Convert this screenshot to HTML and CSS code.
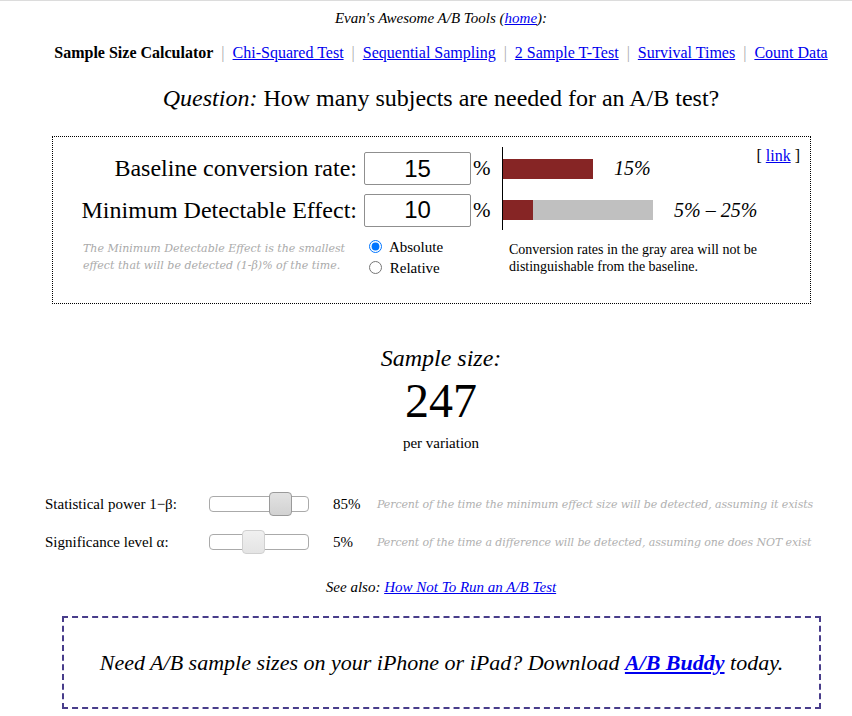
FILE: index.html
```html
<!DOCTYPE html>
<html>
<head>
<meta charset="utf-8">
<link rel="stylesheet" href="styles.css">
</head>
<body>
<div class="page">
  <p class="title">Evan's Awesome A/B Tools (<a href="#">home</a>):</p>
  <p class="nav"><b>Sample Size Calculator</b><span class="sep">|</span><a href="#">Chi-Squared Test</a><span class="sep">|</span><a href="#">Sequential Sampling</a><span class="sep">|</span><a href="#">2 Sample T-Test</a><span class="sep">|</span><a href="#">Survival Times</a><span class="sep">|</span><a href="#">Count Data</a></p>
  <h1 class="question"><i>Question:</i> How many subjects are needed for an A/B test?</h1>

  <div class="calc">
    <div class="lbl r1">Baseline conversion rate:</div>
    <div class="inp r1"><input type="text" value="15"></div>
    <div class="pct r1">%</div>
    <div class="chart r1">
      <div class="bar"><div class="seg red" style="width:90px"></div></div>
      <span class="barval">15%</span>
      <span class="permalink">[ <a href="#">link</a> ]</span>
    </div>

    <div class="lbl r2">Minimum Detectable Effect:</div>
    <div class="inp r2"><input type="text" value="10"></div>
    <div class="pct r2">%</div>
    <div class="chart r2">
      <div class="bar"><div class="seg red" style="width:30px"></div><div class="seg gray" style="width:120px"></div></div>
      <span class="barval">5% – 25%</span>
    </div>

    <div class="hint r3">The Minimum Detectable Effect is the smallest effect that will be detected (1-β)% of the time.</div>
    <div class="radios r3">
      <label><input type="radio" name="mde" checked> Absolute</label>
      <label><input type="radio" name="mde"> Relative</label>
    </div>
    <div class="note r3">Conversion rates in the gray area will not be distinguishable from the baseline.</div>
  </div>

  <div class="result">
    <div class="result-title">Sample size:</div>
    <div class="result-num">247</div>
    <div class="result-sub">per variation</div>
  </div>

  <div class="params">
    <div class="plabel">Statistical power 1−β:</div>
    <div class="slider"><div class="track"></div><div class="thumb active" style="left:60px"></div></div>
    <div class="pval">85%</div>
    <div class="phint">Percent of the time the minimum effect size will be detected, assuming it exists</div>

    <div class="plabel">Significance level α:</div>
    <div class="slider"><div class="track"></div><div class="thumb" style="left:33px"></div></div>
    <div class="pval">5%</div>
    <div class="phint">Percent of the time a difference will be detected, assuming one does NOT exist</div>
  </div>

  <p class="seealso">See also: <a href="#">How Not To Run an A/B Test</a></p>

  <div class="promo"><span>Need A/B sample sizes on your iPhone or iPad? Download <a href="#"><b>A/B Buddy</b></a> today.</span></div>
</div>
</body>
</html>
```

FILE: styles.css
```css
html, body {
  margin: 0;
  padding: 0;
  background: #fff;
}
body {
  border-top: 1px solid #dcdcdc;
  font-family: "Liberation Serif", "Times New Roman", serif;
  color: #000;
}
a { color: #0000ee; }
.page {
  padding-left: 30px;
  width: 822px;
}
.title {
  margin: 0;
  padding-top: 8px;
  text-align: center;
  font-style: italic;
  font-size: 15px;
  line-height: 18px;
}
.nav {
  margin: 16px 0 0;
  text-align: center;
  font-size: 16px;
  line-height: 20px;
}
.sep {
  color: #aaa;
  margin: 0 8px;
}
.question {
  margin: 21px 0 0;
  text-align: center;
  font-weight: normal;
  font-size: 24px;
  line-height: 28px;
}
.calc {
  margin: 24px 0 0 22px;
  width: 757px;
  height: 156px;
  border: 1px dotted #000;
  box-sizing: content-box;
  display: grid;
  grid-template-columns: 311px 107px 31px 1fr;
  grid-template-rows: 43px 40px auto;
  padding-top: 10px;
}
.lbl {
  grid-column: 1;
  text-align: right;
  padding-right: 7px;
  font-size: 24px;
  align-self: center;
}
.r1 { grid-row: 1; }
.r2 { grid-row: 2; }
.r3 { grid-row: 3; }
.inp { grid-column: 2; align-self: center; }
.inp input {
  width: 107px;
  height: 33px;
  box-sizing: border-box;
  border: 1px solid #8f8f8f;
  border-radius: 2px;
  font-family: "Liberation Sans", Arial, sans-serif;
  font-size: 24px;
  text-align: center;
  padding: 0;
  margin: 0;
  display: block;
  color: #000;
}
.pct {
  grid-column: 3;
  align-self: center;
  font-size: 21px;
  padding-left: 2px;
}
.chart {
  grid-column: 4;
  border-left: 1px solid #000;
  display: flex;
  align-items: center;
  padding-right: 10px;
}
.bar { display: flex; height: 20px; }
.seg { height: 20px; }
.red { background: #862525; }
.gray { background: #c0c0c0; }
.barval {
  margin-left: 21px;
  font-style: italic;
  font-size: 20px;
}
.permalink {
  margin-left: auto;
  align-self: flex-start;
  font-size: 16px;
  margin-top: 0;
}
.hint {
  grid-column: 1;
  margin-top: 10px;
  padding-left: 30px;
  padding-right: 10px;
  color: #aaa;
  font-family: "DejaVu Serif", serif;
  font-style: italic;
  font-size: 11px;
  line-height: 17px;
}
.radios {
  grid-column: 2 / 4;
  margin-top: 7px;
  display: flex;
  flex-direction: column;
  font-size: 15px;
  line-height: 21px;
}
.radios input {
  margin: 0 4px 0 5px;
  width: 13px;
  height: 13px;
  vertical-align: -1px;
}
.note {
  grid-column: 4;
  margin-top: 11px;
  padding-left: 7px;
  padding-right: 30px;
  font-size: 14px;
  line-height: 17px;
}
.result {
  margin-top: 40px;
  text-align: center;
}
.result-title {
  font-style: italic;
  font-size: 24px;
  line-height: 28px;
}
.result-num {
  font-size: 48px;
  line-height: 58px;
}
.result-sub {
  font-size: 15px;
  line-height: 26px;
}
.params {
  margin-top: 29px;
  display: grid;
  grid-template-columns: 164px 100px 24px 44px 1fr;
  grid-auto-rows: 38px;
  align-items: center;
  font-size: 15px;
  margin-left: 15px;
}
.plabel { grid-column: 1; }
.slider {
  grid-column: 2;
  position: relative;
  height: 24px;
}
.track {
  position: absolute;
  left: 0;
  right: 0;
  top: 4px;
  height: 16px;
  box-sizing: border-box;
  border: 1px solid #aaa;
  border-radius: 4px;
  background: #fff;
}
.thumb {
  position: absolute;
  top: 0;
  width: 23px;
  height: 24px;
  box-sizing: border-box;
  border: 1px solid #d0d0d0;
  border-radius: 4px;
  background: linear-gradient(#f0f0f0, #e4e4e4);
}
.thumb.active {
  border-color: #9a9a9a;
  background: linear-gradient(#e2e2e2, #d2d2d2);
}
.pval { grid-column: 4; }
.phint {
  grid-column: 5;
  color: #b0b0b0;
  font-family: "DejaVu Serif", serif;
  font-style: italic;
  font-size: 11px;
  letter-spacing: -0.1px;
  white-space: nowrap;
}
.seealso {
  margin: 17px 0 0;
  text-align: center;
  font-style: italic;
  font-size: 15px;
  line-height: 18px;
}
.promo {
  margin: 20px 0 0 32px;
  width: 755px;
  height: 89px;
  border: 2px dashed #483d8b;
  display: flex;
  align-items: center;
  justify-content: center;
  font-style: italic;
  font-size: 22px;
}
```
